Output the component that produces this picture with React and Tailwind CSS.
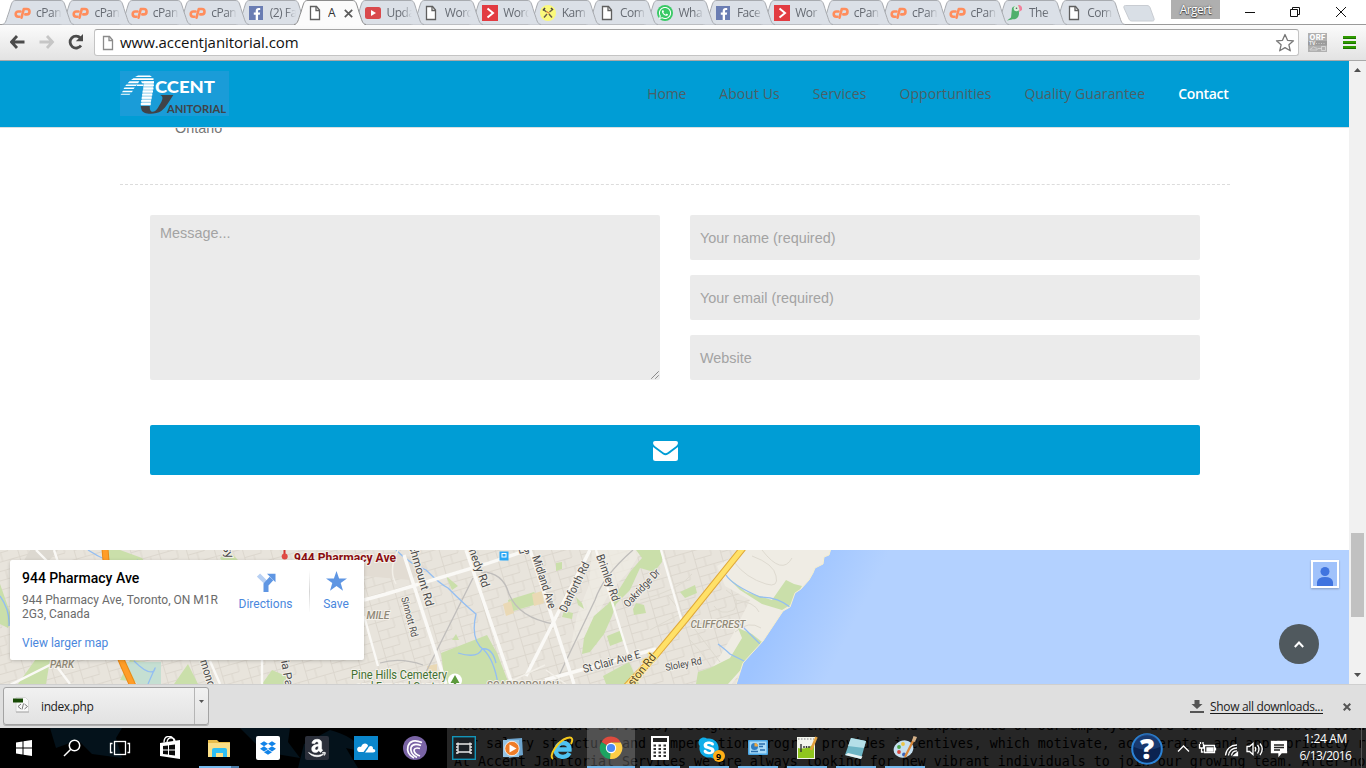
import React from "react";
import { FaFacebookF, FaWhatsapp, FaDropbox, FaAmazon, FaSkype } from "react-icons/fa";

/* ---------- browser tabs ---------- */

const PageIcon = ({ color = "#5f5f5f" }) => (
  <svg width="16" height="16" viewBox="0 0 16 16" fill="#fff" stroke={color} strokeWidth="1.3">
    <path d="M3.5 1.5h6l3 3.5v9.5h-9z" />
    <path d="M9 1.5v4h3.5" fill="none" />
  </svg>
);

const CPanelIcon = () => (
  <svg width="17" height="16" viewBox="0 0 17 16" fill="none" stroke="#ff8d5c" strokeWidth="2.600" strokeLinecap="round" strokeLinejoin="round">
    <path d="M6.500 6.500H4.300a2.600 2.600 0 0 0 0 5.200h1" />
    <path d="M7.500 12.700L9.800 4h3a2.700 2.700 0 0 1 0 5.400h-1.500" />
  </svg>
);

const FacebookIcon = () => (
  <span className="flex h-[14px] w-[14px] items-end justify-end bg-[#6a7db3]">
    <FaFacebookF size={12} color="#fff" />
  </span>
);

const YoutubeIcon = () => (
  <svg width="16" height="16" viewBox="0 0 16 16">
    <rect x="0" y="2" width="16" height="12" rx="2.5" fill="#d9494c" />
    <path d="M6 5l5 3-5 3z" fill="#fff" />
  </svg>
);

const ArrowTabIcon = () => (
  <svg width="16" height="16" viewBox="0 0 16 16">
    <rect width="16" height="16" fill="#e23b41" />
    <path d="M5.5 3.5L11 8l-5.5 4.5" fill="none" stroke="#fff" strokeWidth="2" />
  </svg>
);

const KamIcon = () => (
  <svg width="16" height="16" viewBox="0 0 16 16">
    <circle cx="8" cy="8" r="8" fill="#fbf97b" />
    <path d="M4 12.500L7 9M12 12.500L9 9M4 5l2.500 2M12 5L9.500 7" stroke="#6b5f4a" strokeWidth="1.500" />
    <path d="M3 5.500l2-2.500M11 3l2 2" stroke="#4d4740" strokeWidth="1.600" />
    <path d="M6.500 6.500l3 2" stroke="#e0803c" strokeWidth="1.200" />
  </svg>
);

const WhatsappIcon = () => (
  <span className="flex h-4 w-4 items-center justify-center rounded-full bg-[#39c965]">
    <FaWhatsapp size={14} color="#fff" />
  </span>
);

const ParrotIcon = () => (
  <svg width="16" height="16" viewBox="0 0 16 16">
    <path d="M5 3c2-3 6-2 6.500 1 .5 3 1 5-.5 8-2 3-5 2-6 2.500L0 15.500l4-3z" fill="#4fb06c" />
    <circle cx="9.500" cy="3.500" r="2.800" fill="#d9f0dc" />
    <path d="M11 0c3 0 4.500 1.500 4 5l-3 2c1-3 0-4-1-7z" fill="#f2809c" />
    <circle cx="9.500" cy="3.200" r=".8" fill="#555" />
  </svg>
);

const TABS = [
  ["cPan", CPanelIcon], ["cPan", CPanelIcon], ["cPan", CPanelIcon], ["cPan", CPanelIcon],
  ["(2) Fa", FacebookIcon], ["A", PageIcon], ["Upda", YoutubeIcon], ["Word", PageIcon],
  ["Word", ArrowTabIcon], ["Kam", KamIcon], ["Com", PageIcon], ["Wha", WhatsappIcon],
  ["Face", FacebookIcon], ["Wor", ArrowTabIcon], ["cPan", CPanelIcon], ["cPan", CPanelIcon],
  ["cPan", CPanelIcon], ["The", ParrotIcon], ["Com", PageIcon],
];

function Tab({ label, Icon, active, order }) {
  return (
    <div
      className="relative -mr-[13.600px] flex h-[25px] w-[72px] shrink-0 items-center pl-3"
      style={{ zIndex: active ? 40 : 30 - order }}
    >
      <svg className="absolute inset-0 -z-10" width="72" height="25" viewBox="0 0 72 25">
        <path
          d="M0 24.500C4 24 4 20 7 12C10 2 10 .5 14 .5H58C62 .5 62 2 65 12C68 20 68 24 72 24.500"
          fill={active ? "#fbfbfb" : "#dbe0e7"}
          stroke={active ? "#8c8c8c" : "#a8abb0"}
        />
        {active && <rect x="2" y="24" width="68" height="1" fill="#fbfbfb" />}
      </svg>
      <span className="flex w-[17px] shrink-0 items-center justify-center pt-px"><Icon /></span>
      <span
        className={
          "ml-[5px] overflow-hidden pt-px text-[12px] leading-4 tracking-[-0.5px] whitespace-nowrap " +
          (active ? "w-[9px] text-[#333]" : "w-[26px] mask-r-from-60% mask-r-to-100% text-[#666b73]")
        }
      >
        {label}
      </span>
      {active && (
        <svg className="ml-[7px] mt-px" width="9" height="9" viewBox="0 0 9 9" stroke="#5a5a5a" strokeWidth="1.700">
          <path d="M.8.8l7.400 7.400M8.200.8L.8 8.200" />
        </svg>
      )}
    </div>
  );
}

function TabStrip() {
  return (
    <div className="flex h-[25px] border-b border-[#9a9a9a] bg-white pl-0.5">
      <div className="isolate flex h-[25px]">
        {TABS.map(([label, Icon], i) => (
          <Tab key={i} order={i} label={label} Icon={Icon} active={i === 5} />
        ))}
      </div>
      <svg className="ml-[10px]" width="34" height="24" viewBox="0 0 34 24">
        <path d="M3.500 5.500H25c2 0 2.500 1 3 2l4 11c.5 1.500 0 2.500-1.500 2.500H10c-2 0-2.500-1-3-2L2 8c-.5-1.500 0-2.500 1.500-2.500z" fill="#d9dfe6" stroke="#c8ccd2" />
      </svg>
      <div className="ml-auto flex h-[19px] w-[49px] items-center justify-center bg-[#afafaf] text-[12px] tracking-[-0.6px] text-white [text-shadow:0_0_2px_#444,0_1px_1px_#444]">
        Argert
      </div>
      <svg className="ml-[25px] mr-[20px]" width="101" height="24" viewBox="0 0 101 24" fill="none" stroke="#111">
        <path d="M0 12.500h10" />
        <path d="M45.500 9.500h7v7h-7zM47.500 9.500v-2h7v7h-2" />
        <path d="M91 7l10 10M101 7L91 17" />
      </svg>
    </div>
  );
}

function Toolbar() {
  return (
    <div className="flex h-9 items-center border-b border-[#a9a9a9] bg-linear-to-b from-[#fbfbfb] to-[#e3e3e3] pl-2.5 pr-2.5">
      <svg className="-mt-px" width="76" height="18" viewBox="0 0 76 18" fill="none">
        <g strokeWidth="2.800">
          <path d="M14.500 9H2M7 3L1.500 9 7 15" stroke="#4b4b4b" />
          <path d="M29.500 9H42M37 3l5.500 6-5.500 6" stroke="#c6c6c6" />
          <path d="M71 12.500A6 6 0 1 1 70.500 5" stroke="#4b4b4b" />
        </g>
        <path d="M73 1v7.200h-7.200z" fill="#4b4b4b" />
      </svg>
      <div className="ml-2 flex h-[27px] w-[1205px] items-center rounded-[3px] border border-[#c4c4c4] border-t-[#a3a3a3] bg-white pl-[5px]">
        <PageIcon color="#8b8b8b" />
        <span className="ml-1 pb-0.5 text-[15px] leading-5 tracking-[-0.06px] text-[#111]">www.accentjanitorial.com</span>
        <svg className="ml-auto mr-[3px]" width="20" height="20" viewBox="0 0 20 20" fill="#fff" stroke="#777" strokeWidth="1.300" strokeLinejoin="round">
          <path d="M10 1.500l2.500 5.800 6 .5-4.600 4 1.400 6-5.300-3.200-5.300 3.200 1.400-6-4.600-4 6-.5z" />
        </svg>
      </div>
      <svg className="ml-[9px]" width="19" height="19" viewBox="0 0 19 19">
        <rect width="19" height="19" fill="#b0b0b0" />
        <text x="1.500" y="7" fontSize="7.500" fontWeight="800" fontFamily="Inter, sans-serif" fill="#fff" textLength="16">ORF</text>
        <rect y="8" width="19" height="4.500" fill="#9c9c9c" />
        <text x="1" y="12" fontSize="4.500" fontWeight="800" fontFamily="Inter, sans-serif" fill="#eee">TV</text>
        <path d="M8 10.500h10" stroke="#ccc" strokeDasharray="1 1.500" />
        <path d="M2 17h7c1-2-1-2.500-2-2-1-2-3-1-3 .3-2 0-2 1.700-2 1.700zM13.500 13.500h4v4h-4zM10 15.500h4" fill="none" stroke="#ddd" strokeWidth=".8" />
      </svg>
      <svg className="ml-auto" width="14" height="13" viewBox="0 0 14 13">
        <path d="M1 1.500h13M1 6.500h13M1 11.500h13" stroke="#2f9a00" strokeWidth="3" />
        <path d="M1 2.500h13M1 7.500h13M1 12.500h13" stroke="#1b7400" strokeWidth="1" />
      </svg>
    </div>
  );
}

/* ---------- web page ---------- */

function Logo() {
  return (
    <svg className="-mt-0.5" width="109" height="45" viewBox="0 0 109 45">
      <rect width="109" height="45" fill="#1a9cd8" />
      <g fill="#fff">
        <path d="M18 4.500h12l2 1.500H15zM13.500 7.200h20v1.900H11zM9.500 10.300h9.800l-1.200 1.900H7.600zM21 10.300h13v1.900H22zM6.500 13.400h10.800l-1.300 1.700H5.200zM17 13.400h6v1.500h-6zM23.500 13.400h10.400v1.900H23.500zM4.500 16.500h10.300l-1.200 1.600H3.500zM23.500 16.500h10v1.900h-10zM3 19.700h10l-1.200 1.500H2zM22.800 19.600H33v1.900H22.500zM1.500 22.700h9l-1 1h-9zM22.300 22.700h10v1.900H22zM21.800 25.800h9.800v1.900h-10zM21.300 28.900h9.600v1.900H21zM20.800 32h9.800v2h-9.800z" />
        <path d="M24 10h10l-2 14-1.500 10.500h-9.500z" opacity=".6" />
      </g>
      <path d="M20.800 35h9c-.5 6 3.500 8.500 8 2l3.500-6c2.500-5 .5-6-1-7h13c-4 6-7 12-12 16-6 4-19 4-20-2-.3-1.200-.6-2-.5-3z" fill="#404347" />
      <text x="35" y="22.300" fontFamily="Lato, sans-serif" fontWeight="900" fontSize="17.500" textLength="60" lengthAdjust="spacingAndGlyphs" fill="#fff">CCENT</text>
      <text x="47" y="41.500" fontFamily="Lato, sans-serif" fontWeight="700" fontSize="11.500" textLength="59" lengthAdjust="spacingAndGlyphs" fill="#404347">ANITORIAL</text>
    </svg>
  );
}

function SiteHeader() {
  const item = "text-[14px] tracking-[0.08px] text-[#4c5f66]";
  return (
    <header className="flex h-[67px] shrink-0 items-center justify-between border-b border-[#d9dfe1] bg-[#009dd5] pl-[120px] pr-[120.500px]">
      <Logo />
      <nav className="flex gap-[33px] pb-0.5">
        <a className="text-[14px] tracking-[-0.15px] text-[#4c5f66]">Home</a>
        <a className={item}>About Us</a>
        <a className={item}>Services</a>
        <a className={item}>Opportunities</a>
        <a className={item}>Quality Guarantee</a>
        <a className="text-[14px] font-semibold tracking-[-0.3px] text-white">Contact</a>
      </nav>
    </header>
  );
}

function Field({ label }) {
  return <div className="flex h-[45px] items-center rounded-[2px] bg-[#ebebeb] pt-0.5 pl-2.5">{label}</div>;
}

function ContactForm() {
  return (
    <section className="flex h-[422px] shrink-0 flex-col px-[120px] font-['Liberation_Sans',Arial,sans-serif] text-[14.400px] text-[#a3a3a3]">
      <div className="h-[56px] overflow-hidden pl-[55px] text-[14.400px] leading-4 text-[#777]">
        <p className="-mt-2">Ontario</p>
      </div>
      <div className="w-[1110px] border-t border-dashed border-[#dcdcdc]" />
      <div className="mt-[30px] grid w-[1110px] grid-cols-2 gap-[30px] px-[30px]">
        <div className="flex h-[165px] items-end justify-between rounded-[2px] bg-[#ebebeb] pl-2.5">
          <span className="self-start pt-[9px] leading-[19px]">Message...</span>
          <svg width="9" height="9" viewBox="0 0 9 9" stroke="#555" strokeWidth="1" strokeDasharray="1.200 .3">
            <path d="M.5 7.500l7-7M4.500 7.500l3-3" />
          </svg>
        </div>
        <div className="flex flex-col gap-[15px]">
          <Field label="Your name (required)" />
          <Field label="Your email (required)" />
          <Field label="Website" />
        </div>
      </div>
      <div className="mx-[30px] mt-[45px] flex h-[50px] w-[1050px] items-center justify-center rounded-[2px] bg-[#009dd5] pt-0.5 pr-[19px]">
        <svg width="25" height="20" viewBox="0 0 25 20" fill="#fff">
          <path d="M2 0h21q2 0 2 2-.2 1.800-2 3.200L14.500 11.500q-2 1.500-4 0L2 5.200Q.2 3.800 0 2 0 0 2 0z" />
          <path d="M0 5.900q8 6 9.800 7.300 2.700 1.900 5.400 0Q18 11.300 25 5.900V17.500q0 2.500-2.500 2.500h-20Q0 20 0 17.500z" />
        </svg>
      </div>
    </section>
  );
}

function MapLabel({ x, y, r = 0, w, children, fill = "#4a4a4a", size = 11.5, ...rest }) {
  return (
    <text
      transform={`translate(${x} ${y}) rotate(${r})`}
      fontSize={size} textLength={w} lengthAdjust="spacingAndGlyphs"
      fill={fill} stroke="#f4f1ea" strokeWidth="2" paintOrder="stroke" {...rest}
    >
      {children}
    </text>
  );
}

function MapDrawing() {
  return (
    <svg className="block" width="1349" height="134" viewBox="0 550 1349 134" fontFamily="Roboto, sans-serif">
      <defs>
        <pattern id="streets" width="27" height="18" patternUnits="userSpaceOnUse" patternTransform="rotate(-16)">
          <path d="M0 .5h27M0 9.500h18M.5 0v18M18 0v9M10 9v9" stroke="#dcd7ce" strokeWidth="1" fill="none" />
        </pattern>
        <linearGradient id="lake" gradientUnits="userSpaceOnUse" x1="780" y1="610" x2="845" y2="642">
          <stop offset="0" stopColor="#9ec4ff" />
          <stop offset="1" stopColor="#b3d1ff" />
        </linearGradient>
      </defs>
      <rect y="550" width="1349" height="134" fill="#e8e4dc" />
      <rect y="550" width="760" height="134" fill="url(#streets)" />

      {/* open ground */}
      <g fill="#efece4">
        <path d="M745 550h95l-50 60-60 76h-30l20-30 12-20 18-36-25-14-8-20z" />
        <path d="M592 550h50l-12 20-20 22-25 45-14 8 6-30 12-30z" opacity=".7" />
      </g>
      <g fill="none" stroke="#dedad0">
        <path d="M752 556q22 8 24 20 3 12-10 8-20-6-32-22M762 550q20 26 30 8M726 590q16 10 8 20-14 6-20-4M735 600q20 2 24 12M735 632q14-12 26-4M690 640q20 20 30 44M668 596q20 24 52 66M640 600q40-10 52-26M650 630q25-14 40-20" />
      </g>

      {/* parks */}
      <g fill="#cadfaa">
        <path d="M636 550h26v12l-8 10-14-4-10 22-14 14-4 12-8 18-14 18-8 2 2-16 10-22 14-12 12-16 10-16 12-14z" />
        <path d="M556 563l6-1v7l-6 2zM508 600l26-8 10 10-34 10zM564 611l9 2-1 6-10-2zM576 597l6 6 2 6-6-4zM607 636l15-6 1 11-13 5zM636 603l8 2 2 8-12 2-1-6zM680 592l15-7 2 8-12 5z" />
        <path d="M441 653l46-18 10 18 12 31h-64zM452 640l4-6 3 6zM603 676l26-14 10 22h-33z" />
        <path d="M726 576l20 16 26 8 14-20 8 4 8 2-10 18-10 6-20-6-22-14zM738 628l14 6 10 8-16 22-18 20h-32l2-12 12-4 20-10 12-20z" />
        <path d="M106 550h14l22 8 12 18h-40zM0 584l12 34-4 10-8-4zM18 684l20-28 12 4-4 24zM120 680l10-20 30 4-4 20zM174 684l14-20 10 20zM262 684l10-14 14 6v8zM228 550l20 20-16 4-12-16zM442 664l20-14-4 20zM446 576l12 10-6 4zM446 655l8-6v35h-12z" />
      </g>
      <path d="M125 662h36v22h-24z" fill="#c5dfd2" />
      <path d="M503 604l8-3 3 12-8 3zM532 594l10-3 2 12-10 3zM427 666l10-2v12l-9 2z" fill="#ead9b5" />
      <path d="M30 550h28l-12 14H22z" fill="#dcd8d0" />
      <path d="M390 552q20 2 38 16l-18 12-46-4v-18z" fill="#e2dcd3" />

      {/* rail lines */}
      <g fill="none" stroke="#bfbdbb" strokeWidth="1.300">
        <path d="M473 578l-50 100M481 572q22 0 28 22 10 24 45 30M633 550q-30 26-38 50l-40 84M380 663q20-6 43 2" />
      </g>

      {/* creeks */}
      <g fill="none" stroke="#93bef2" strokeWidth="1.300">
        <path d="M396 550q14 14 30 20 14 14 22 18 18 18 28 26-6 26 8 36 10 10 14 34M458 653q20 6 24-4 10-2 14 14M726 575q6 10 34 22 18 0 30 10M718 644q8 6 12 10l16 8M738 622l22 22M88 550q30 20 50 10M134 661q14 14 20 10 4-10-6 13M0 596q10 14 9 30" />
      </g>

      {/* roads */}
      <g fill="none" stroke="#faf9f6" strokeWidth="3.400">
        <path d="M364 600l22-6 100-30 42-14M404 555l42 129M466 550l46 134M530 550l44 134M590 550l-64 126M545 680l111-31" />
        <path d="M596 550l32 104M661 550l21 72M54 550l8 24M36 550l12 12M0 690l60-30 54-12M262 660v24M364 616l14 50M210 661l10 23M52 660l18 24" strokeWidth="2.400" />
      </g>
      <path d="M398 550q-10 20-2 34M566 684l-20-14M545 665l-40 19" stroke="#f2efe8" strokeWidth="1.500" fill="none" />

      {/* highways */}
      <path d="M105 548q2 30 6 40 4 60 12 76l10 22" fill="none" stroke="#e98a18" strokeWidth="7" />
      <path d="M105 548q2 30 6 40 4 60 12 76l10 22" fill="none" stroke="#ff9d28" strokeWidth="5" />
      <path d="M743 548l-58 72-30 36-32 34" fill="none" stroke="#e0a93a" strokeWidth="7" />
      <path d="M743 548l-58 72-30 36-32 34" fill="none" stroke="#ffe168" strokeWidth="5" />

      {/* lake */}
      <path d="M832 545l-3 10-5 2-1 7-8 4-2 5-4 7-8 9-6 4-5 14-7 4-20 30-20 22-8 25H1355V545z" fill="url(#lake)" stroke="#f6efcf" strokeWidth="1" />

      {/* labels */}
      <MapLabel x={405} y={533} r={74} w={77}>Birchmount Rd</MapLabel>
      <MapLabel x={462} y={532} r={70} w={60}>Kennedy Rd</MapLabel>
      <MapLabel x={532} y={557} r={72} w={55}>Midland Ave</MapLabel>
      <MapLabel x={566} y={613} r={-64} w={54}>Danforth Rd</MapLabel>
      <MapLabel x={596} y={556} r={70} w={49}>Brimley Rd</MapLabel>
      <MapLabel x={628} y={608} r={-47} w={48} size={10.500}>Oakridge Dr</MapLabel>
      <MapLabel x={401} y={598} r={75} w={41} size={10}>Sinnott Rd</MapLabel>
      <MapLabel x={584} y={673} r={-15} w={59}>St Clair Ave E</MapLabel>
      <MapLabel x={666} y={671} r={-11} w={37} size={10}>Sloley Rd</MapLabel>
      <MapLabel x={619} y={704} r={-51} w={60} fill="#5c4a1a" stroke="#ffe9a0">Kingston Rd</MapLabel>
      <MapLabel x={200} y={661} r={73} w={28}>mond</MapLabel>
      <MapLabel x={281} y={661} r={80} w={26}>ia Pa</MapLabel>
      <MapLabel x={222} y={546} r={70} w={14}>Sy</MapLabel>
      <MapLabel x={519} y={554} r={-15} w={11}>Eg</MapLabel>
      <MapLabel x={690.500} y={627.500} w={55} fill="#8f8877" fontStyle="italic" fontWeight="500">CLIFFCREST</MapLabel>
      <MapLabel x={366.500} y={618.500} w={23} fill="#8f8877" fontStyle="italic" fontWeight="500">MILE</MapLabel>
      <MapLabel x={50} y={668} w={24} fill="#8f8877" fontStyle="italic" fontWeight="500">PARK</MapLabel>
      <MapLabel x={487} y={688.500} w={72} fill="#8f8877" fontWeight="500">SCARBOROUGH</MapLabel>
      <MapLabel x={351} y={679} w={96} fill="#3f7030" fontWeight="400" size={12}>Pine Hills Cemetery</MapLabel>
      <MapLabel x={356} y={690.500} w={88} fill="#3f7030" fontWeight="400" size={12}>and Funeral Centre</MapLabel>
      <MapLabel x={294} y={561.500} w={102} fill="#8b0d10" fontWeight="700" size={12}>944 Pharmacy Ave</MapLabel>

      {/* markers */}
      <circle cx="455" cy="680.500" r="7" fill="#fff" />
      <path d="M455 675l4.500 8h-3.300v3h-2.400v-3h-3.300z" fill="#5c9a3c" />
      <rect x="499.500" y="551.500" width="9" height="9" fill="#2ba7f5" />
      <rect x="502" y="553.500" width="4" height="3.500" fill="none" stroke="#fff" />
      <path d="M284.500 549v6" stroke="#d5332e" strokeWidth="2" />
      <circle cx="284.700" cy="556.500" r="3" fill="#e04a44" />
    </svg>
  );
}

function MapSection() {
  return (
    <section className="relative h-[134px] shrink-0 overflow-hidden">
      <MapDrawing />
      <div className="absolute left-2.5 top-2.5 flex h-[100px] w-[354px] rounded-[2px] bg-white pl-3 font-[Roboto,sans-serif] text-[12px] leading-[14px] shadow-[0_1px_4px_-1px_rgba(0,0,0,.3)]">
        <div className="w-[205px] pt-[9px]">
          <h2 className="text-[14px] leading-[18px] font-medium text-black">944 Pharmacy Ave</h2>
          <p className="mt-[6px] whitespace-nowrap text-[#6b6b6b]">944 Pharmacy Ave, Toronto, ON M1R<br />2G3, Canada</p>
          <a className="mt-[15px] block text-[#4a87dd]">View larger map</a>
        </div>
        <div className="flex w-[77px] flex-col items-center pt-[13px] text-[#4a87dd]">
          <svg className="ml-0.5" width="19" height="19" viewBox="0 0 19 19" fill="none">
            <path d="M1.500 2l7 7" stroke="#b7d0f4" strokeWidth="4.500" />
            <path d="M9 19v-7.500L14.500 5.500" stroke="#5f96e3" strokeWidth="5" />
            <path d="M10 .7h8.500v8.500z" fill="#5f96e3" />
          </svg>
          <span className="mt-[5px]">Directions</span>
        </div>
        <div className="ml-[5px] mt-2.5 h-[43px] w-px bg-linear-to-b from-white via-[#d5d5d5] to-white" />
        <div className="flex w-[52px] flex-col items-center pt-[11px] text-[#4a87dd]">
          <svg width="21" height="20" viewBox="0 0 21 20" fill="#5f96e3">
            <path d="M10.500 0l2.600 7.400H21l-6.300 4.700L17 19.700l-6.500-4.700L4 19.700l2.300-7.600L0 7.400h7.900z" />
          </svg>
          <span className="mt-[6px]">Save</span>
        </div>
      </div>
      <div className="absolute right-[10px] top-[10px] flex h-7 w-7 items-end justify-center border-2 border-white bg-[#a0c2fb] shadow-[0_1px_2px_rgba(0,0,0,.25)]">
        <svg width="16" height="20" viewBox="0 0 16 20" fill="#4074df">
          <circle cx="8" cy="5.500" r="4.500" />
          <path d="M0 20v-4q1-5 8-5t8 5v4z" />
        </svg>
      </div>
      <button className="absolute right-[30px] top-[74px] flex h-10 w-10 items-center justify-center rounded-full bg-[#50595e]">
        <svg width="10" height="7" viewBox="0 0 10 7" fill="none" stroke="#fff" strokeWidth="2">
          <path d="M.8 6L5 1.500 9.200 6" />
        </svg>
      </button>
    </section>
  );
}

function ScrollBar() {
  return (
    <div className="flex w-[17px] flex-col items-center bg-[#f1f1f1]">
      <svg className="mt-[7px]" width="7" height="4" viewBox="0 0 7 4"><path d="M3.500 0L7 4H0z" fill="#505050" /></svg>
      <div className="mt-[461px] h-[84px] w-[13px] bg-[#c1c1c1]" />
      <svg className="mt-auto mb-[7px]" width="7" height="4" viewBox="0 0 7 4"><path d="M3.500 4L7 0H0z" fill="#505050" /></svg>
    </div>
  );
}

/* ---------- download shelf ---------- */

function DownloadShelf() {
  return (
    <div className="flex h-11 shrink-0 items-center border-t border-[#cfcfcf] bg-[#dfdfdf] pl-[3px] pr-[15px] text-[12px] text-[#1b1b1b]">
      <div className="-mt-px flex h-[38px] w-[206px] rounded-[3px] border border-[#a3a3a3] bg-linear-to-b from-[#f1f1f1] to-[#e2e2e2] shadow-[0_1px_0_#b0b0b0]">
        <div className="flex w-[191px] items-center border-r border-[#b5b5b5] pl-[9px]">
          <svg className="-mt-0.5" width="17" height="16" viewBox="0 0 17 16">
            <path d="M3 .5h9.500l3 3V15H3z" fill="#f8f8f8" stroke="#d0d0d0" strokeWidth=".8" />
            <path d="M3 15h13" stroke="#aaa" />
            <path d="M8 7L5 9.500 8 12M11.500 7l3 2.500-3 2.500M10.500 6.500L9 12.500" fill="none" stroke="#7a7a7a" />
            <rect y="1.500" width="10" height="4" fill="#184a06" />
          </svg>
          <span className="ml-[11px] pt-0.5 tracking-[-0.4px]">index.php</span>
        </div>
        <svg className="ml-[4px] mt-[12px]" width="5" height="3" viewBox="0 0 5 3"><path d="M0 0h5L2.500 3z" fill="#555" /></svg>
      </div>
      <svg className="ml-auto" width="14" height="13" viewBox="0 0 14 13" fill="#555">
        <path d="M4.500 0h5v4h3L7 9 1.500 4h3zM0 11h14v2H0z" />
      </svg>
      <span className="ml-[6px] tracking-[-0.34px] underline underline-offset-2">Show all downloads...</span>
      <svg className="ml-[20px]" width="8" height="8" viewBox="0 0 8 8" stroke="#555" strokeWidth="2"><path d="M.7.7l6.600 6.600M7.300.7L.7 7.300" /></svg>
    </div>
  );
}

/* ---------- taskbar ---------- */

const Ico = ({ size = 24, children }) => (
  <svg width={size} height={size} viewBox="0 0 24 24">{children}</svg>
);

const START_ITEMS = [
  <Ico key="win"><g fill="#fff"><path d="M4 6.500l6.500-1v6H4zM11.500 5.300L20 4v7.500h-8.500zM4 12.500h6.500v6L4 17.500zM11.500 12.500H20V20l-8.500-1.300z" /></g></Ico>,
  <Ico key="search"><g fill="none" stroke="#fff" strokeWidth="1.500"><circle cx="14.500" cy="9.500" r="5.200" /><path d="M10.800 13.300L4 20" /></g></Ico>,
  <Ico key="view"><g fill="none" stroke="#fff" strokeWidth="1.300"><rect x="6.500" y="5.500" width="11" height="13" /><path d="M4.500 7.500h-2v9h2M19.500 7.500h2v9h-2" /></g></Ico>,
];

const APPS = [
  { id: "store", icon: <Ico><path d="M2 7l20-3v19L2 20z" fill="#fff" /><path d="M6 6.500c0-8 9-8 10-1.500M9 6c1-6 7-5 8-1" fill="none" stroke="#fff" strokeWidth="1.300" /><path d="M5 10l5-.5v4H5zM11 9.300l6-.8v5h-6zM5 14.500h5v4l-5-.5zM11 14.500h6v5l-6-.8z" fill="#0a0a0a" /></Ico> },
  { id: "explorer", bar: "bg-[#76b9ed]", stack: true, icon: <Ico><path d="M1 4h9l2 2h11v15H1z" fill="#e9bd4c" /><path d="M1 7h22v14H1z" fill="#fbdf87" /><path d="M5 21v-7q0-2 2-2h11q2 0 2 2v7h-4v-4H9v4z" fill="#2ebef2" /></Ico> },
  { id: "dropbox", icon: <span className="flex h-6 w-6 items-center justify-center rounded-[2px] bg-white"><FaDropbox size={16} color="#1183e8" /></span> },
  { id: "amazon", icon: <span className="flex h-6 w-6 items-center justify-center rounded-[2px] bg-[#2b2f3a]"><FaAmazon size={20} color="#fff" stroke="#fff" strokeWidth="14" /></span> },
  { id: "onedrive", icon: <Ico><rect width="24" height="24" fill="#0a86cb" /><path d="M4 15.500c-2.500-3.500 1-5.500 3-4.500 1.500-5 7-4 7-1l-4.500 6H5zM11 16.500l3-4c1.500-4 5.500-2.500 5 .5 3 0 3 3.500 0 3.500z" fill="#fff" /></Ico> },
  { id: "bittorrent", icon: <Ico><circle cx="12" cy="12" r="12" fill="#7a64a5" /><g fill="none" stroke="#fff" strokeWidth="1.700"><path d="M19 6.500Q8 2 5 10q-2 8 6 12" /><path d="M18 9.500q-8-3-10 2-1.500 6 6 10" /><path d="M17 12.500q-5-1.500-6 1.500 0 4 6 6" /></g></Ico> },
  { id: "movie", icon: <Ico><rect x=".7" y=".7" width="22.600" height="22.600" fill="#1b2025" stroke="#1394b8" strokeWidth="1.400" /><path d="M6 6.500v11M18 6.500v11M6 8h12M6 16h12" stroke="#e8e8e8" strokeWidth="1.300" fill="none" /><path d="M4 8h2M4 11h2M4 14h2M4 17h2M18 8h2M18 11h2M18 14h2M18 17h2" stroke="#e8e8e8" strokeWidth="1.500" /></Ico> },
  { id: "player", icon: <Ico><path d="M6 3l15-1 1 17-14 3z" fill="#6ea5cf" /><path d="M2 4h16v17H2z" fill="#94c3e4" /><circle cx="11" cy="12.500" r="7.200" fill="#ef7d28" stroke="#fff" strokeWidth=".8" /><path d="M8.500 8.500l7 4-7 4z" fill="#fff" /></Ico> },
  { id: "ie", icon: <Ico><g fill="none"><path d="M19.500 17c-3 6-15 5-13.500-3.500C7.500 4.500 20 5 19.500 13.500H7" stroke="#4fc3f2" strokeWidth="4.400" /><path d="M3 23C-2 20 8 5 17 2c6-2 6 2 4 6" stroke="#f5c91d" strokeWidth="2" /></g></Ico> },
  { id: "chrome", active: true, bar: "bg-[#76b9ed]", icon: <Ico><path d="M12 12L2.500 6A11 11 0 0 1 21.700 6.500H12z" fill="#dd4b3e" /><path d="M12 12L2.400 6.200A11 11 0 0 0 11 23l5-8.500z" fill="#1da362" /><path d="M12 12l-1 11A11 11 0 0 0 21.800 6.500H12z" fill="#fdcd47" /><path d="M7.500 14L2.400 6.200 12 12z" fill="#1da362" /><circle cx="12" cy="12" r="5.200" fill="#fff" /><circle cx="12" cy="12" r="4.100" fill="#4a8af4" /></Ico> },
  { id: "calc", bar: "bg-[#76b9ed]", icon: <Ico><rect x="3" y="0" width="18" height="24" fill="#fff" /><rect x="5" y="2" width="14" height="4" fill="#222" /><path d="M5.500 9.500h13M5.500 13h13M5.500 16.500h13M5.500 20h13" stroke="#333" strokeWidth="1.800" strokeDasharray="2.500 2.500" /></Ico> },
  { id: "skype", bar: "bg-[#76b9ed]", badge: "9", icon: <span className="flex h-6 w-6 items-center justify-center rounded-full bg-[radial-gradient(circle,white_50%,transparent_52%)]"><FaSkype size={24} color="#10aeea" /></span> },
  { id: "panel", bar: "bg-[#76b9ed]", icon: <Ico><rect x="2" y="4" width="20" height="15" rx="1" fill="#49a5e3" /><rect x="3.500" y="5.500" width="17" height="12" fill="#a9daf7" /><circle cx="8.500" cy="10.500" r="3.500" fill="#2e7cc0" /><path d="M8.500 10.500V7a3.500 3.500 0 0 1 3.500 3.500z" fill="#f3a83c" /><path d="M13 8h6M13 10.500h4M5 15.500h7M14 14h5" stroke="#2a6fae" strokeWidth="1.400" /></Ico> },
  { id: "editor", bar: "bg-[#76b9ed]", icon: <Ico><path d="M2 1h18v22H2z" fill="#f2f5ec" /><path d="M3 12q8 2 16-4v14H3z" fill="#8fc61e" /><path d="M3 3h16" stroke="#bbb" strokeDasharray="1.500 1.500" strokeWidth="2" /><path d="M6 8v8M9 10v2M11.500 10v2M14 10v2" stroke="#333" strokeWidth="1.400" /><path d="M21.500 1l-5.500 13" stroke="#e2a03c" strokeWidth="2.600" /></Ico> },
  { id: "notepad", bar: "bg-[#76b9ed]", icon: <Ico><path d="M7 2l15 3-5 18L1 19z" fill="#6db5c5" /><path d="M7 2l15 3-2 7L4 10z" fill="#b4dfe8" /><path d="M1 19l16 4 1.500-2.500L4 17z" fill="#e8f3f5" /></Ico> },
  { id: "paint", bar: "bg-[#76b9ed]", icon: <Ico><ellipse cx="10.500" cy="13" rx="10" ry="8.500" fill="#c5dff0" transform="rotate(-20 10.500 13)" /><circle cx="6" cy="11" r="1.900" fill="#4da64c" /><circle cx="10" cy="8" r="1.900" fill="#ecc443" /><circle cx="6" cy="16" r="1.900" fill="#d5473e" /><circle cx="11" cy="18.500" r="1.900" fill="#3a63b8" /><path d="M21.500 2L12 21" stroke="#d98739" strokeWidth="2.200" /><path d="M19 5l1.500-5 3.500 1-2 5z" fill="#d4b088" /></Ico> },
];

function AppButton({ app }) {
  return (
    <div className="flex h-10 w-[49px] flex-col items-center">
      <div className={"flex h-[38px] w-12 items-center justify-center pt-0.5 " + (app.active ? "bg-white/20" : "")}>
        <div className="relative">
          {app.icon}
          {app.badge && (
            <span className="absolute -right-1 -bottom-0.5 flex h-3 w-3 items-center justify-center rounded-full bg-[#ffae17] text-[9px] font-bold leading-none text-black">
              {app.badge}
            </span>
          )}
        </div>
      </div>
      {app.bar && (
        <div className={"flex h-0.5 " + (app.active ? "w-12 " : "w-10 ") + app.bar}>
          {app.stack && <span className="ml-auto w-2 bg-[#4b7ba6]" />}
        </div>
      )}
    </div>
  );
}

function Taskbar() {
  return (
    <div className="relative isolate flex h-10 shrink-0 bg-black">
      {/* editor window seen through the translucent bar */}
      <div className="absolute inset-y-0 right-0 left-[447px] -z-10 overflow-hidden bg-[#262626] pl-[7px] font-['DejaVu_Sans_Mono',monospace] text-[13.290px] leading-[18px] whitespace-pre text-black">
        <p className="-mt-[11px]">Accent Janitorial Services, recognizes that the talent and experience of our employees are our most valuable resour</p>
        <p>Our salary structure and compensation program provides incentives, which motivate, accelerate, and appropriately re</p>
        <p>At Accent Janitorial Services we are always looking for new vibrant individuals to join our growing team. After-hou</p>
      </div>
      <svg className="absolute left-0 top-0 -z-10" width="447" height="40" viewBox="0 0 447 40" fill="#04121b">
        <path d="M50 0h72l-6 10 6 20-30-4-14-14-22 8zM240 0h50l-2 14 12 16-24-4-20-10zM330 2q24 6 34 22l-18-4 12 20h-60l6-24z" />
      </svg>

      {START_ITEMS.map((icon, i) => (
        <div key={i} className="flex h-10 w-12 items-center justify-center">{icon}</div>
      ))}
      <div className="ml-px flex">
        {APPS.map((app) => <AppButton key={app.id} app={app} />)}
      </div>

      <div className="ml-auto flex items-center pt-0.5">
        <svg className="mr-[14px]" width="32" height="32" viewBox="0 0 32 32">
          <circle cx="16" cy="16" r="14.800" fill="#0b2350" stroke="#2b83d6" strokeWidth="2" />
          <path d="M3 14a13 13 0 0 1 26 0q-13 6-26 0z" fill="#234a86" opacity=".6" />
          <text x="16" y="26" textAnchor="middle" fontSize="28" fontWeight="800" fontFamily="Open Sans, sans-serif" fill="#fff">?</text>
        </svg>
        <svg width="112" height="18" viewBox="0 0 112 18" fill="none" stroke="#fff" strokeWidth="1.300">
          <path d="M1 11.500L6.500 6l5.500 5.500" />
          <path d="M27.500 5.500h10v7h-10zM38.500 7.500v3" />
          <path d="M30 8h6v3h-6z" fill="#fff" />
          <path d="M22.500 4v4h4V4M24.500 8v4h2M23.500 2v2M26 2v2" />
          <path d="M48.500 15.500A11 11 0 0 1 60 5M51.500 15.500A8 8 0 0 1 60 8M54.500 15.500A5.500 5.500 0 0 1 60 10.800" />
          <path d="M57 15.500l3.500-3v3z" fill="#fff" />
          <path d="M70 6.500h2.500L76 3.500v11l-3.500-3H70zM78 7q1.500 2 0 4.500M80.500 5q3 4 0 8.500M83 3.500q4.500 5.500 0 11.500" />
          <path d="M94.500 1.500h15v11h-5l-2.500 3v-3h-7.500z" fill="#fff" />
          <path d="M97 5h10M97 7.500h10M97 10h6" stroke="#222" />
        </svg>
        <div className="ml-[5px] mr-1 w-[63px] pb-[5px] text-center text-[12px] leading-[17px] text-white">
          <p className="tracking-[-0.35px]">1:24 AM</p>
          <p className="tracking-[-0.55px]">6/13/2016</p>
        </div>
        <div className="-mt-0.5 mr-1 h-10 w-px bg-[#555]" />
      </div>
    </div>
  );
}

export default function App() {
  return (
    <div className="flex h-[768px] w-[1366px] flex-col overflow-hidden bg-white font-['Open_Sans',sans-serif]">
      <TabStrip />
      <Toolbar />
      <main className="flex h-[623px] shrink-0">
        <div className="flex w-[1349px] flex-col">
          <SiteHeader />
          <ContactForm />
          <MapSection />
        </div>
        <ScrollBar />
      </main>
      <DownloadShelf />
      <Taskbar />
    </div>
  );
}
